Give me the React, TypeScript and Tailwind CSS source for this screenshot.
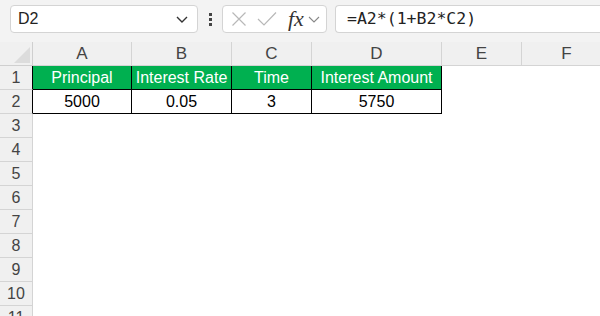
import React from 'react';

const cols = [
  { key: 'A', w: 99 },
  { key: 'B', w: 100 },
  { key: 'C', w: 80 },
  { key: 'D', w: 130 },
  { key: 'E', w: 80 },
  { key: 'F', w: 90 },
];

const data: Record<number, string[]> = {
  1: ['Principal', 'Interest Rate', 'Time', 'Interest Amount'],
  2: ['5000', '0.05', '3', '5750'],
};

const rows = [1, 2, 3, 4, 5, 6, 7, 8, 9, 10, 11];

const FormulaBar: React.FC = () => (
  <div className="flex h-[42px] items-start pt-[5px] bg-[#f3f3f3]">
    <div className="ml-[10px] flex h-[28px] w-[188px] items-center justify-between rounded-[4px] border border-[#d4d4d4] bg-white pl-[7px] pr-[7px]">
      <span className="text-[16px] text-[#222]">D2</span>
      <svg width="16" height="14" viewBox="0 0 16 14">
        <path d="M3 5 L8 10 L13 5" fill="none" stroke="#333" strokeWidth="1.4" />
      </svg>
    </div>
    <div className="ml-[9px] mr-[9px] flex h-[28px] w-[6px] flex-col items-center justify-center gap-[2px]">
      <span className="block h-[3px] w-[3px] bg-[#444]" />
      <span className="block h-[3px] w-[3px] bg-[#444]" />
      <span className="block h-[3px] w-[3px] bg-[#444]" />
    </div>
    <div className="flex h-[28px] w-[105px] items-center rounded-[4px] border border-[#d4d4d4] bg-white">
      <svg className="ml-[8px]" width="16" height="16" viewBox="0 0 16 16">
        <path d="M1.5 1.5 L14.5 14.5 M14.5 1.5 L1.5 14.5" fill="none" stroke="#b8b8b8" strokeWidth="1.2" />
      </svg>
      <svg className="ml-[10px]" width="20" height="16" viewBox="0 0 20 16">
        <path d="M1 8 L7 14 L19 1.5" fill="none" stroke="#b8b8b8" strokeWidth="1.2" />
      </svg>
      <span className="ml-[11px] text-[22px] italic leading-none text-[#333]" style={{ fontFamily: '"Liberation Serif", serif' }}>
        fx
      </span>
      <svg className="ml-[4px]" width="12" height="10" viewBox="0 0 12 10">
        <path d="M1 3 L6 8 L11 3" fill="none" stroke="#888" strokeWidth="1.1" />
      </svg>
    </div>
    <div className="ml-[8px] flex h-[28px] flex-1 items-center rounded-l-[4px] border border-r-0 border-[#d4d4d4] bg-white pl-[11px]">
      <span className="text-[16.5px] text-[#222]" style={{ fontFamily: '"DejaVu Sans Mono", monospace' }}>
        =A2*(1+B2*C2)
      </span>
    </div>
  </div>
);

const App: React.FC = () => {
  return (
    <div
      className="h-[316px] w-[600px] overflow-hidden bg-white"
      style={{ fontFamily: '"Liberation Sans", Arial, sans-serif' }}
    >
      <FormulaBar />
      <div className="flex h-[24px] bg-[#f0f0f0]">
        <div className="relative h-[24px] w-[33px] shrink-0 border-r border-b border-[#cfcfcf]">
          <svg className="absolute left-[14px] top-[5px]" width="16" height="16" viewBox="0 0 16 16">
            <path d="M16 0 L16 16 L0 16 Z" fill="#dcdcdc" />
          </svg>
        </div>
        {cols.map((c) => (
          <div
            key={c.key}
            className="flex h-[24px] shrink-0 items-center justify-center border-r border-b border-[#d4d4d4] text-[17px] text-[#444]"
            style={{ width: c.w }}
          >
            {c.key}
          </div>
        ))}
      </div>
      {rows.map((r) => {
        const inTable = r <= 2;
        return (
          <div key={r} className="flex h-[24px]">
            <div
              className={
                inTable
                  ? 'flex h-[24px] w-[33px] shrink-0 items-center justify-center border-r border-b border-r-black border-b-[#d4d4d4] bg-[#f0f0f0] text-[16px] text-[#444]'
                  : 'flex h-[24px] w-[33px] shrink-0 items-center justify-center border-r border-b border-[#d4d4d4] bg-[#f0f0f0] text-[16px] text-[#444]'
              }
            >
              {r}
            </div>
            {cols.map((c, i) => {
              const value = data[r]?.[i];
              if (inTable && i < 4) {
                return (
                  <div
                    key={c.key}
                    className={
                      r === 1
                        ? 'flex h-[24px] shrink-0 items-center justify-center border-r border-b border-black bg-[#00b050] text-[16px] text-white'
                        : 'flex h-[24px] shrink-0 items-center justify-center border-r border-b border-black bg-white text-[16px] text-black'
                    }
                    style={{ width: c.w }}
                  >
                    {value}
                  </div>
                );
              }
              return <div key={c.key} className="h-[24px] shrink-0 bg-white" style={{ width: c.w }} />;
            })}
          </div>
        );
      })}
    </div>
  );
};

export default App;
